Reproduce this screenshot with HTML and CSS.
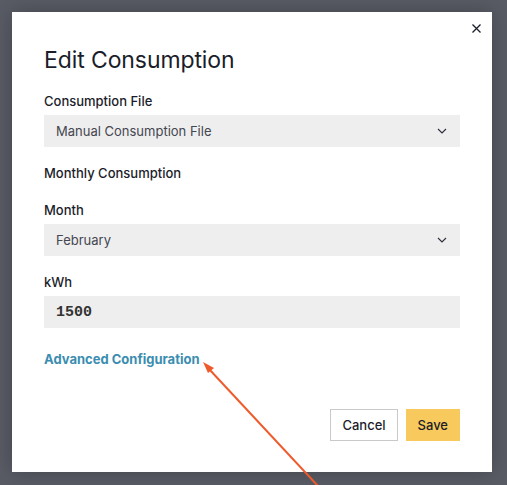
FILE: index.html
```html
<!DOCTYPE html>
<html lang="en">
<head>
  <meta charset="UTF-8" />
  <meta name="viewport" content="width=device-width, initial-scale=1.0"/>
  <title>Edit Consumption</title>
  <link rel="stylesheet" href="styles.css">
</head>
<body>
  <div class="modal">
    <button class="close-btn" aria-label="Close">
      <svg width="9" height="9" viewBox="0 0 9 9"><path d="M0.5 0.5L8.5 8.5M8.5 0.5L0.5 8.5" stroke="#1b1d2a" stroke-width="1.3" fill="none"/></svg>
    </button>
    <h2 class="title">Edit Consumption</h2>

    <div class="field">
      <label>Consumption File</label>
      <div class="select">
        <span>Manual Consumption File</span>
        <svg width="10" height="6" viewBox="0 0 10 6"><path d="M1 1L5 5L9 1" stroke="#2b2d3a" stroke-width="1.1" fill="none"/></svg>
      </div>
    </div>

    <div class="section-title">Monthly Consumption</div>

    <div class="field">
      <label>Month</label>
      <div class="select">
        <span>February</span>
        <svg width="10" height="6" viewBox="0 0 10 6"><path d="M1 1L5 5L9 1" stroke="#2b2d3a" stroke-width="1.1" fill="none"/></svg>
      </div>
    </div>

    <div class="field">
      <label>kWh</label>
      <div class="input">1500</div>
    </div>

    <a class="advanced" href="#">Advanced Configuration</a>

    <div class="actions">
      <button class="btn btn-cancel">Cancel</button>
      <button class="btn btn-save">Save</button>
    </div>
  </div>

  <!-- annotation arrow -->
  <svg class="arrow" width="507" height="485" viewBox="0 0 507 485">
    <line x1="318" y1="486" x2="209" y2="369" stroke="#ef5a2b" stroke-width="2"/>
    <path d="M203 362L214 368L208 373Z" fill="#ef5a2b"/>
  </svg>
</body>
</html>
```

FILE: styles.css
```css
body {
  margin: 0;
  background-color: #595c65;
  font-family: "Inter", "Liberation Sans", sans-serif;
  color: #1b1d2a;
  height: 485px;
  overflow: hidden;
  position: relative;
}

/* Modal */
.modal {
  position: relative;
  margin: 12px 15px 0 12px;
  width: 480px;
  height: 460px;
  box-sizing: border-box;
  background-color: #fff;
  padding: 36px 32px 0 32px;
  box-shadow: 0 0 20px rgba(0, 0, 0, 0.25);
}

.close-btn {
  position: absolute;
  top: 6px;
  right: 6px;
  width: 20px;
  height: 20px;
  padding: 0;
  border: none;
  background: none;
  display: flex;
  align-items: center;
  justify-content: center;
}

.title {
  margin: 0 0 21px;
  font-size: 23px;
  font-weight: 400;
  line-height: 24px;
  letter-spacing: -0.1px;
}

/* Fields */
.field {
  display: flex;
  flex-direction: column;
  margin-bottom: 18px;
}

.field label,
.section-title {
  font-size: 13px;
  font-weight: 500;
  line-height: 16px;
  margin-bottom: 6px;
}

.section-title {
  margin-bottom: 21px;
}

.select,
.input {
  height: 32px;
  background-color: #eeeeee;
  display: flex;
  align-items: center;
  justify-content: space-between;
  padding: 0 13px 0 12px;
  font-size: 13px;
  color: #444650;
}

.input {
  font-family: "Liberation Mono", monospace;
  font-weight: 700;
  font-size: 15px;
  color: #333;
}

.advanced {
  display: block;
  margin-top: 23px;
  font-size: 13px;
  line-height: 16px;
  font-weight: 700;
  color: #3b8db0;
  text-decoration: none;
}

/* Buttons */
.actions {
  display: flex;
  justify-content: flex-end;
  gap: 8px;
  margin-top: 42px;
}

.btn {
  height: 32px;
  padding: 0 11px;
  font-family: inherit;
  font-size: 13px;
  font-weight: 500;
  color: #1b1d2a;
  border: 1px solid transparent;
  cursor: pointer;
}

.btn-cancel {
  background-color: #fff;
  border-color: #c9c9cc;
}

.btn-save {
  background-color: #f8c95c;
  border-color: #f8c95c;
}

.arrow {
  position: absolute;
  top: 0;
  left: 0;
  pointer-events: none;
}
```
